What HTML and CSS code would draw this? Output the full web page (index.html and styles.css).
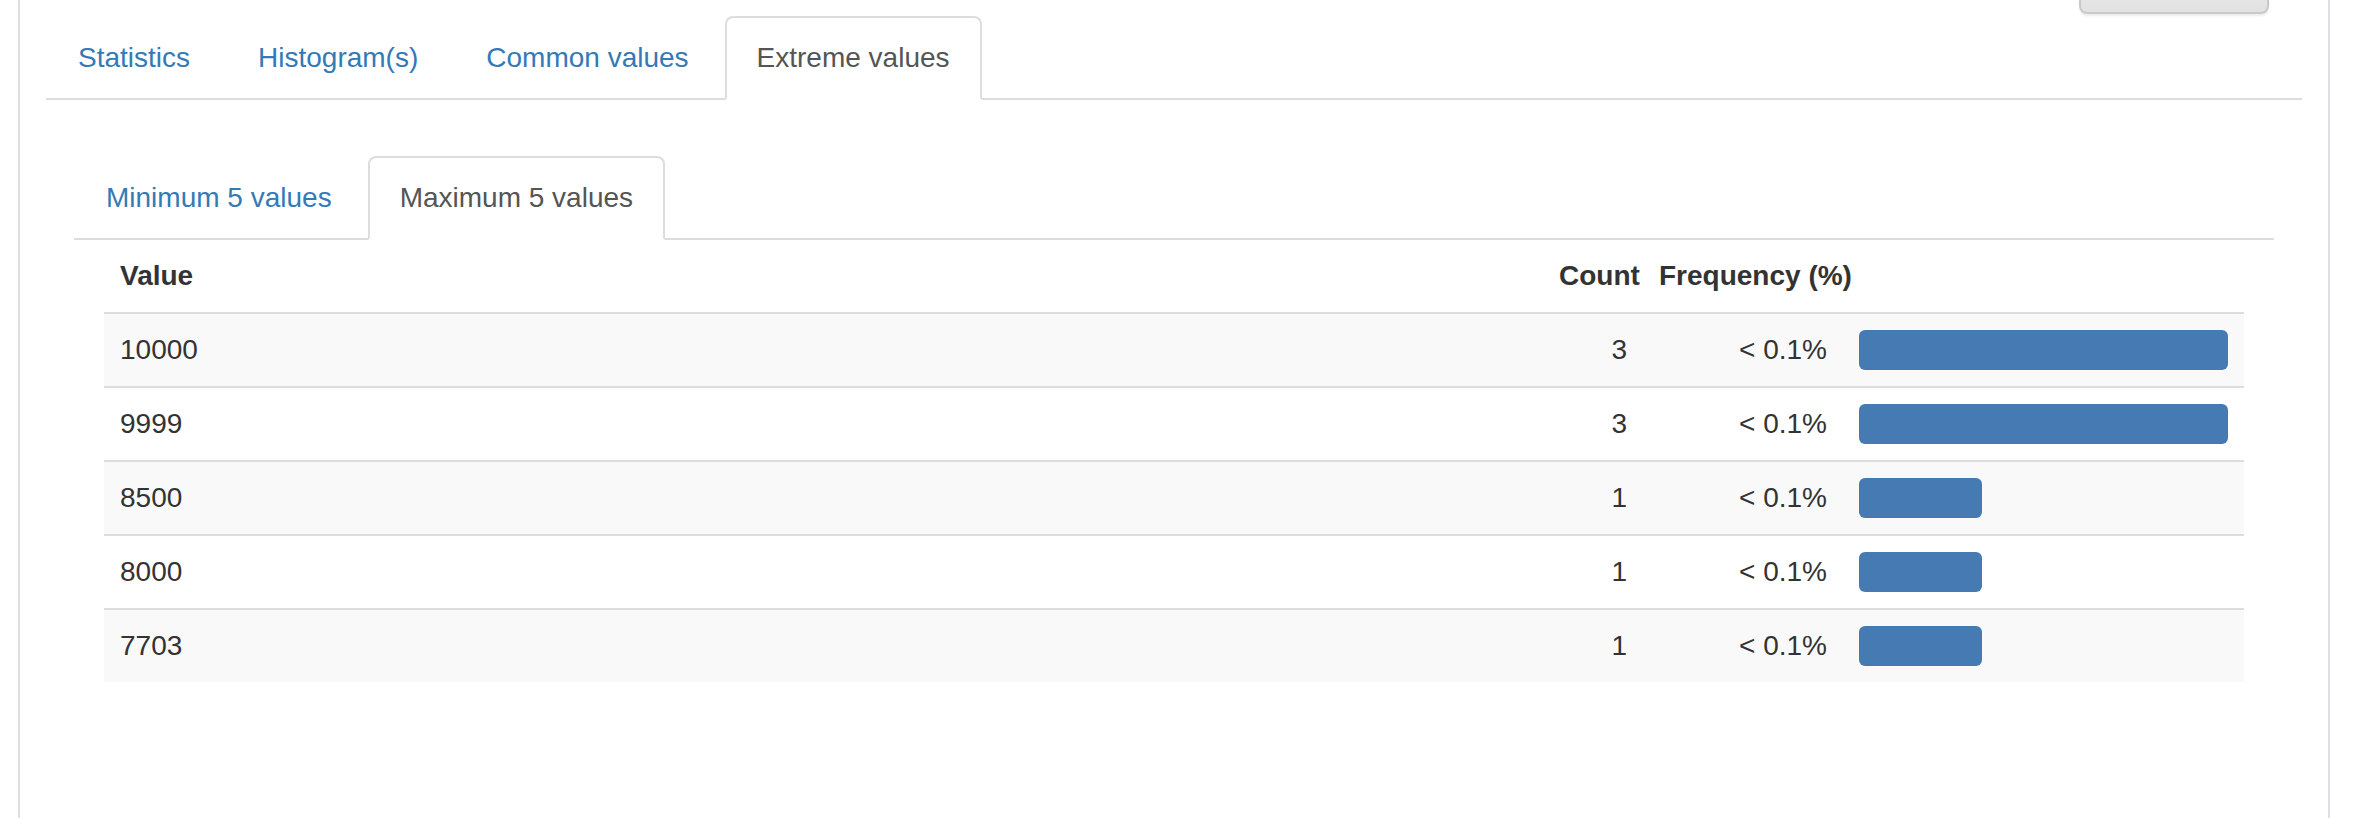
FILE: index.html
```html
<!DOCTYPE html>
<html lang="en">
<head>
<meta charset="utf-8">
<title>Extreme values</title>
<link rel="stylesheet" href="styles.css">
</head>
<body>
<div class="panel">
  <div class="toolbar">
    <button class="btn" type="button" aria-label="Toggle details"></button>
  </div>
  <ul class="nav-tabs">
    <li><a href="#">Statistics</a></li>
    <li><a href="#">Histogram(s)</a></li>
    <li><a href="#">Common values</a></li>
    <li class="active"><a href="#">Extreme values</a></li>
  </ul>
  <div class="tab-content">
    <ul class="nav-tabs">
      <li><a href="#">Minimum 5 values</a></li>
      <li class="active"><a href="#">Maximum 5 values</a></li>
    </ul>
    <table class="freq">
      <colgroup>
        <col class="c-value">
        <col class="c-count">
        <col class="c-freq">
        <col class="c-bar">
      </colgroup>
      <thead>
        <tr>
          <th>Value</th>
          <th class="num">Count</th>
          <th colspan="2">Frequency (%)</th>
        </tr>
      </thead>
      <tbody>
        <tr>
          <td>10000</td>
          <td class="num">3</td>
          <td class="num">&lt; 0.1%</td>
          <td><div class="bar" style="width:100%"></div></td>
        </tr>
        <tr>
          <td>9999</td>
          <td class="num">3</td>
          <td class="num">&lt; 0.1%</td>
          <td><div class="bar" style="width:100%"></div></td>
        </tr>
        <tr>
          <td>8500</td>
          <td class="num">1</td>
          <td class="num">&lt; 0.1%</td>
          <td><div class="bar" style="width:33.3%"></div></td>
        </tr>
        <tr>
          <td>8000</td>
          <td class="num">1</td>
          <td class="num">&lt; 0.1%</td>
          <td><div class="bar" style="width:33.3%"></div></td>
        </tr>
        <tr>
          <td>7703</td>
          <td class="num">1</td>
          <td class="num">&lt; 0.1%</td>
          <td><div class="bar" style="width:33.3%"></div></td>
        </tr>
      </tbody>
    </table>
  </div>
</div>
</body>
</html>
```

FILE: styles.css
```css
html, body {
  margin: 0;
  padding: 0;
  background: #fff;
}

body {
  font-family: "Liberation Sans", Arial, Helvetica, sans-serif;
  font-size: 28px;
  line-height: 40px;
  color: #333;
  overflow: hidden;
  height: 818px;
}

.panel {
  margin: 0 24px 0 18px;
  height: 818px;
  box-sizing: border-box;
  border-left: 2px solid #dedee4;
  border-right: 2px solid #dedee4;
  padding: 0 26px;
}

.toolbar {
  height: 16px;
  display: flex;
  justify-content: flex-end;
  align-items: flex-end;
  padding-right: 33px;
}

.btn {
  flex: none;
  width: 190px;
  height: 60px;
  margin-bottom: 2px;
  border: 2px solid #c9c9c9;
  border-radius: 8px;
  background: linear-gradient(#f0f0f0, #e2e2e2);
  box-shadow: 0 2px 2px rgba(0, 0, 0, 0.08);
  padding: 0;
}

.nav-tabs {
  display: flex;
  margin: 0;
  padding: 0;
  list-style: none;
  border-bottom: 2px solid #ddd;
}

.nav-tabs li {
  margin-bottom: -2px;
}

.nav-tabs a {
  display: block;
  margin-right: 4px;
  padding: 20px 30px;
  line-height: 40px;
  border: 2px solid transparent;
  border-radius: 8px 8px 0 0;
  color: #337ab7;
  text-decoration: none;
}

.nav-tabs li.active a {
  color: #555;
  background: #fff;
  border-color: #ddd #ddd transparent;
}

.tab-content {
  padding: 56px 28px 0;
}

.freq {
  width: calc(100% - 60px);
  margin: 0 30px;
  border-collapse: collapse;
  border-spacing: 0;
  table-layout: fixed;
}

.c-count { width: 100px; }
.c-freq { width: 200px; }
.c-bar { width: 401px; }

.freq th,
.freq td {
  padding: 16px;
  line-height: 40px;
  vertical-align: middle;
  text-align: left;
}

.freq th {
  font-weight: bold;
  border-bottom: 2px solid #ddd;
}

.freq td {
  border-top: 2px solid #ddd;
}

.freq .num {
  text-align: right;
}

.freq tbody tr:nth-child(odd) {
  background: #f9f9f9;
}

.bar {
  height: 40px;
  background: #467ab2;
  border-radius: 6px;
}
```
